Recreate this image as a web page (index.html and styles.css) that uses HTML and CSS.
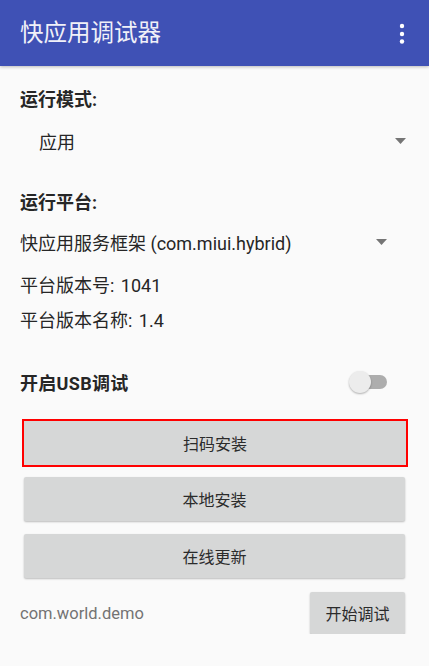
FILE: index.html
```html
<!DOCTYPE html>
<html lang="zh-CN">
<head>
<meta charset="utf-8">
<title>快应用调试器</title>
<link rel="stylesheet" href="styles.css">
</head>
<body>
<header class="appbar">
  <span class="appbar-title">快应用调试器</span>
  <svg class="appbar-menu" width="8" height="22" viewBox="0 0 8 22">
    <circle cx="4" cy="3" r="2.2" fill="#fff"/>
    <circle cx="4" cy="11" r="2.2" fill="#fff"/>
    <circle cx="4" cy="18.5" r="2.2" fill="#fff"/>
  </svg>
</header>
<main class="content">
  <div class="label label-mode">运行模式:</div>
  <div class="spinner spinner-mode">
    <span class="spinner-text">应用</span>
    <svg class="arrow" width="11" height="6" viewBox="0 0 11 6"><path d="M0 0h11L5.5 6z" fill="#757575"/></svg>
  </div>
  <div class="label label-platform">运行平台:</div>
  <div class="spinner spinner-platform">
    <span class="spinner-text">快应用服务框架 (com.miui.hybrid)</span>
    <svg class="arrow" width="11" height="6" viewBox="0 0 11 6"><path d="M0 0h11L5.5 6z" fill="#757575"/></svg>
  </div>
  <div class="info info-code">平台版本号: 1041</div>
  <div class="info info-name">平台版本名称: 1.4</div>
  <div class="usb-row">
    <span class="usb-label">开启USB调试</span>
    <span class="switch"><span class="switch-track"></span><span class="switch-thumb"></span></span>
  </div>
  <button class="btn btn-wide btn-focused">扫码安装</button>
  <button class="btn btn-wide btn-local">本地安装</button>
  <button class="btn btn-wide btn-update">在线更新</button>
  <div class="bottom-row">
    <span class="pkg">com.world.demo</span>
    <button class="btn btn-start">开始调试</button>
  </div>
</main>
</body>
</html>
```

FILE: styles.css
```css
* { box-sizing: border-box; }
html, body {
  margin: 0;
  padding: 0;
  background: #fafafa;
  font-family: Roboto, "Noto Sans CJK SC", sans-serif;
  color: #262626;
}
.appbar {
  height: 66px;
  background: #3f51b5;
  display: flex;
  align-items: center;
  justify-content: space-between;
  padding: 0 23px 0 20px;
  box-shadow: 0 1px 3px rgba(0,0,0,0.25);
  position: relative;
}
.appbar-title {
  color: #f0f0f8;
  font-size: 23.5px;
  line-height: 30px;
}
.appbar-menu { display: block; margin-top: 1px; }
.content {
  padding: 22px 20px 0 20px;
  display: flex;
  flex-direction: column;
}
.label {
  font-size: 18px;
  font-weight: 700;
  line-height: 24px;
  height: 24px;
}
.label-platform { margin-top: 26px; }
.spinner {
  display: flex;
  align-items: center;
  justify-content: space-between;
  font-size: 18px;
}
.spinner-mode {
  margin-top: 5px;
  height: 48px;
  padding: 0 3px 0 19px;
}
.spinner-platform {
  margin-top: 7px;
  height: 40px;
  padding-right: 22px;
}
.arrow { display: block; }
.info {
  font-size: 18px;
  line-height: 24px;
  height: 24px;
  word-spacing: 2px;
}
.info-code { margin-top: 12px; }
.info-name { margin-top: 11px; }
.usb-row {
  margin-top: 29px;
  height: 40px;
  display: flex;
  align-items: center;
  justify-content: space-between;
  padding-right: 22px;
}
.usb-label {
  font-size: 18px;
  font-weight: 700;
  letter-spacing: 0.3px;
}
.switch {
  position: relative;
  width: 38px;
  height: 24px;
  display: block;
}
.switch-track {
  position: absolute;
  right: 0;
  top: 5px;
  width: 24px;
  height: 14px;
  border-radius: 7px;
  background: #adadad;
}
.switch-thumb {
  position: absolute;
  left: 0;
  top: 1px;
  width: 22px;
  height: 22px;
  border-radius: 50%;
  background: #ececec;
  box-shadow: 0 1px 2px rgba(0,0,0,0.3);
}
.btn {
  font-family: Roboto, "Noto Sans CJK SC", sans-serif;
  font-size: 16px;
  color: #2b2b2b;
  background: #d6d7d7;
  border: none;
  border-radius: 2px;
  box-shadow: 0 1px 2px rgba(0,0,0,0.25);
  padding: 0;
  cursor: pointer;
}
.btn-wide {
  height: 44px;
  margin: 0 4px 0 4px;
}
.btn-focused {
  margin: 17px 1px 0 2px;
  height: 48px;
  border: 2px solid #ff0000;
  border-radius: 0;
  box-shadow: none;
}
.btn-local { margin-top: 10px; }
.btn-update { margin-top: 13px; }
.bottom-row {
  margin-top: 14px;
  display: flex;
  align-items: center;
  justify-content: space-between;
  padding-right: 4px;
}
.pkg {
  font-size: 16.5px;
  color: #737373;
}
.btn-start {
  width: 95px;
  height: 42px;
}
```
